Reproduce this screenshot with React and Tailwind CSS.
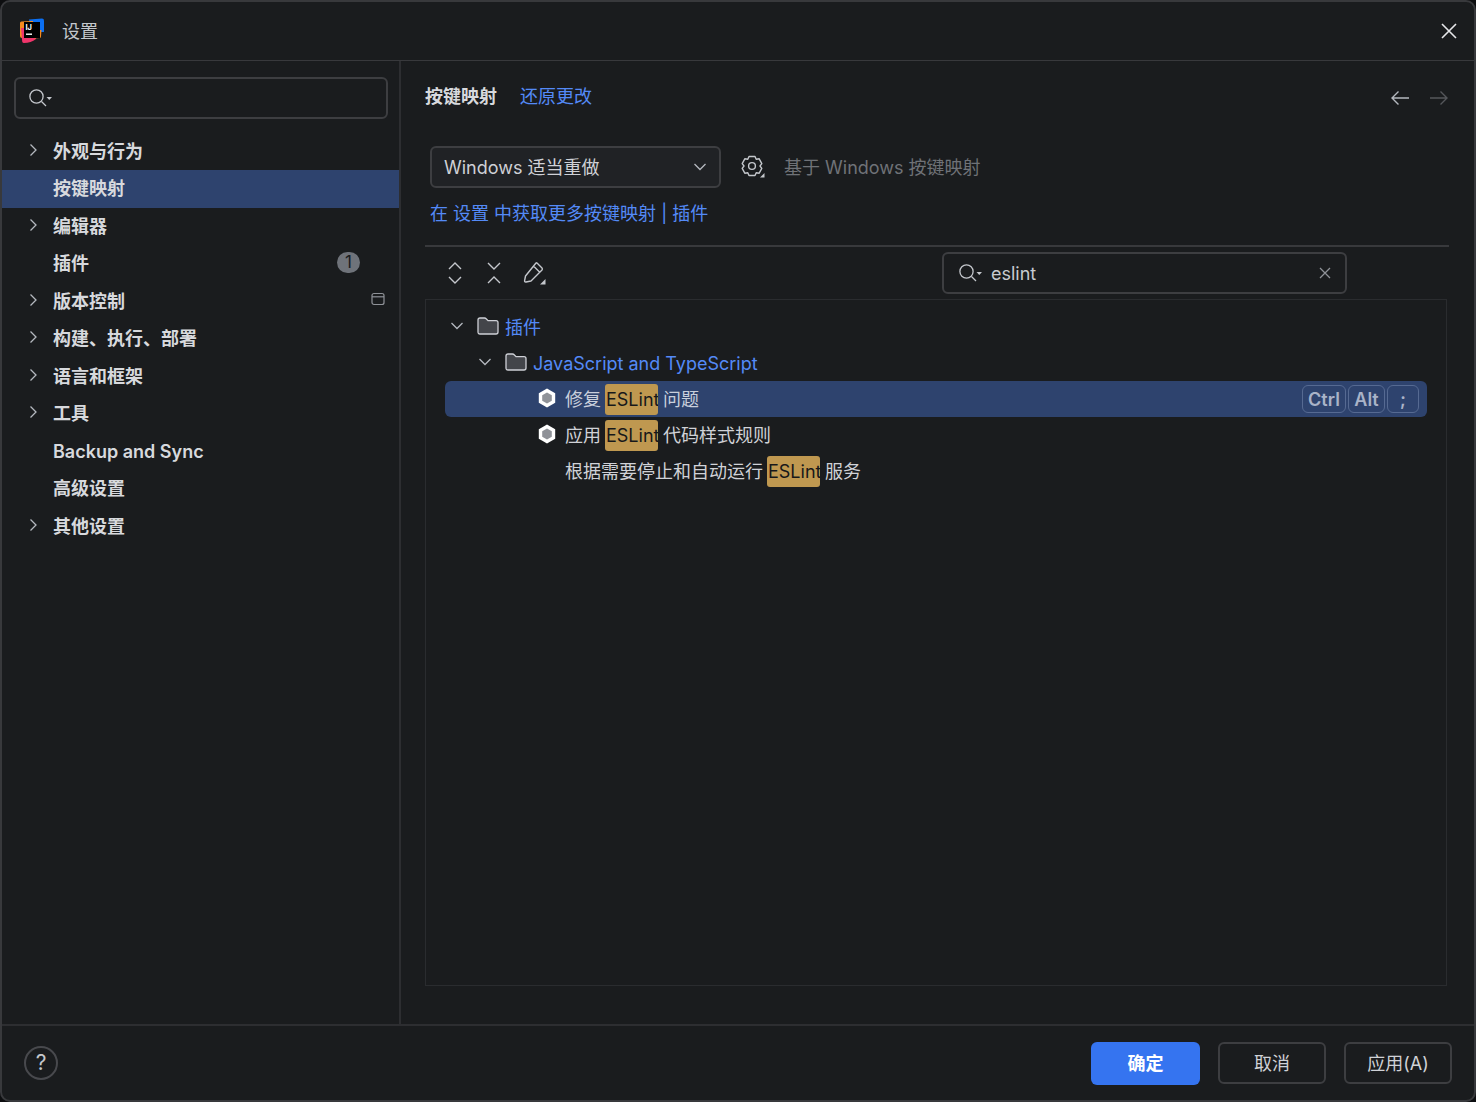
import React from 'react'

const navItems = [
  { label: '外观与行为', arrow: true },
  { label: '按键映射', selected: true },
  { label: '编辑器', arrow: true },
  { label: '插件', badge: true },
  { label: '版本控制', arrow: true, windowIcon: true },
  { label: '构建、执行、部署', arrow: true },
  { label: '语言和框架', arrow: true },
  { label: '工具', arrow: true },
  { label: 'Backup and Sync' },
  { label: '高级设置' },
  { label: '其他设置', arrow: true },
]

function Logo() {
  return (
    <svg width="26" height="26" viewBox="0 0 26 26" className="shrink-0">
      <path d="M10 1.5 L23 0.5 Q25 0.5 25 2.5 L25 14 L12 14 Z" fill="#0b6ff2" />
      <path d="M1 5 Q1 3.5 2.5 3.5 L14 3 L14 20 L3 20 Q1 20 1 18 Z" fill="#f58a1f" />
      <path d="M2 10 L15 10 L17 21 Q12 25 5 25 Q3.5 25 3.2 23.5 Z" fill="#f0356b" />
      <path d="M19 12 L22.5 12 L22 18.5 Q22 20 20.5 20 L15 20.5 Z" fill="#f58a1f" />
      <rect x="5" y="4" width="16" height="16" fill="#000" />
      <text x="6.5" y="11.5" fill="#fff" fontSize="7.5" fontWeight="700" fontFamily="Inter, sans-serif">IJ</text>
      <rect x="7" y="15.5" width="6" height="1.4" fill="#fff" />
    </svg>
  )
}

function ChevronRight() {
  return (
    <svg width="16" height="16" viewBox="0 0 16 16" fill="none" stroke="#b4b8bf" strokeWidth="1.3">
      <path d="M5.5 2.5 L11 8 L5.5 13.5" />
    </svg>
  )
}

function ChevronDown({ color = '#b4b8bf' }) {
  return (
    <svg width="16" height="16" viewBox="0 0 16 16" fill="none" stroke={color} strokeWidth="1.3">
      <path d="M2.5 5 L8 10.5 L13.5 5" />
    </svg>
  )
}

function SearchIcon() {
  return (
    <svg width="28" height="20" viewBox="0 0 28 20" fill="none" className="shrink-0">
      <circle cx="9.5" cy="8.5" r="6.6" stroke="#c4c7cc" strokeWidth="1.3" />
      <path d="M14.5 13.5 L19 18" stroke="#c4c7cc" strokeWidth="1.3" />
      <path d="M19.5 9 L25 9 L22.25 12 Z" fill="#c4c7cc" />
    </svg>
  )
}

function FolderIcon() {
  return (
    <svg width="22" height="20" viewBox="0 0 22 20" fill="none" className="shrink-0">
      <path
        d="M1 4 Q1 2 3 2 L7.5 2 Q8.5 2 9.2 2.8 L11 4.6 L19 4.6 Q21 4.6 21 6.6 L21 16 Q21 18 19 18 L3 18 Q1 18 1 16 Z"
        fill="#43454a"
        stroke="#ced0d6"
        strokeWidth="1.3"
      />
    </svg>
  )
}

function ActionIcon() {
  return (
    <svg width="22" height="22" viewBox="0 0 22 22" className="shrink-0">
      <path d="M11 1.5 L19.2 6.2 L19.2 15.8 L11 20.5 L2.8 15.8 L2.8 6.2 Z" fill="#fff" />
      <path d="M11 5.5 L15.8 8.2 L15.8 13.8 L11 16.5 L6.2 13.8 L6.2 8.2 Z" fill="#8f9298" />
    </svg>
  )
}

function Highlight() {
  return (
    <span className="inline-flex h-[31px] w-[53px] items-center overflow-hidden rounded-[3px] bg-[#bf9850] pl-[1px] text-[#17181a]">
      ESLint
    </span>
  )
}

function Kbd({ children, width }) {
  return (
    <span
      className="flex h-[28px] items-center justify-center rounded-[6px] border border-[#566a92] text-[18px] font-semibold text-[#a9b3c8]"
      style={{ width }}
    >
      {children}
    </span>
  )
}

export default function App() {
  return (
    <div className="h-[1102px] w-[1476px] overflow-hidden bg-[#0d0e10] text-[18px] text-[#d5d7dc] [font-family:Inter,'Noto_Sans_CJK_SC',sans-serif]">
      <div className="flex h-full flex-col rounded-[10px] border-2 border-[#38393c] bg-[#1a1c1e]">
        {/* title bar */}
        <div className="flex h-[59px] shrink-0 items-center border-b border-[#38393c] pl-[17px] pr-[16px]">
          <Logo />
          <span className="ml-[17px] text-[#c5c8cd]">设置</span>
          <svg width="18" height="18" viewBox="0 0 18 18" stroke="#e6e7ea" strokeWidth="1.6" className="ml-auto">
            <path d="M2 2 L16 16 M16 2 L2 16" />
          </svg>
        </div>

        <div className="flex min-h-0 flex-1">
          {/* left nav */}
          <div className="w-[399px] shrink-0 border-r-2 border-[#2d2e31] pt-[16px]">
            <div className="mx-[12px] flex h-[42px] w-[374px] items-center rounded-[6px] border-2 border-[#3d3e41] pl-[11px]">
              <SearchIcon />
            </div>
            <div className="mt-[13.5px]">
              {navItems.map((item) => (
                <div
                  key={item.label}
                  className={`flex h-[37.5px] items-center font-semibold text-[#d7d9dd] ${item.selected ? 'bg-[#2e436e]' : ''}`}
                >
                  <span className="mb-[3px] ml-[23px] flex w-[28px] shrink-0 items-center">
                    {item.arrow && <ChevronRight />}
                  </span>
                  <span>{item.label}</span>
                  {item.badge && (
                    <span className="mb-[3px] ml-auto mr-[39px] flex h-[21px] w-[23px] items-center justify-center rounded-full bg-[#6f737a] text-[17px] font-normal text-[#1a1c1e]">
                      1
                    </span>
                  )}
                  {item.windowIcon && (
                    <svg width="14" height="14" viewBox="0 0 14 14" fill="none" stroke="#8f9298" strokeWidth="1.2" className="mb-[4px] ml-auto mr-[14px]">
                      <rect x="1" y="1.5" width="12" height="11" rx="2" />
                      <path d="M1 4.8 L13 4.8" />
                    </svg>
                  )}
                </div>
              ))}
            </div>
          </div>

          {/* right panel */}
          <div className="min-w-0 flex-1 pl-[24px] pr-[25px]">
            <div className="flex h-[70px] items-center">
              <span className="font-semibold text-[#d7d9dd]">按键映射</span>
              <span className="ml-[23px] text-[#548af7]">还原更改</span>
              <div className="ml-auto mt-[4px] flex items-center gap-[19px]">
                <svg width="20" height="16" viewBox="0 0 20 16" fill="none" stroke="#b4b8bf" strokeWidth="1.4">
                  <path d="M19 8 L2 8 M8.5 1.5 L2 8 L8.5 14.5" />
                </svg>
                <svg width="20" height="16" viewBox="0 0 20 16" fill="none" stroke="#55575b" strokeWidth="1.4">
                  <path d="M1 8 L18 8 M11.5 1.5 L18 8 L11.5 14.5" />
                </svg>
              </div>
            </div>

            <div className="ml-[5px] mt-[15px] flex items-center">
              <div className="flex h-[42px] w-[291px] items-center justify-between rounded-[6px] border-2 border-[#3d3e41] bg-[#202225] pl-[12px] pr-[11px] text-[#cfd1d6]">
                <span>Windows 适当重做</span>
                <ChevronDown />
              </div>
              <svg width="26" height="26" viewBox="0 0 26 26" fill="none" className="ml-[19px]">
                <path
                  d="M9 2.5 L15 2.5 L16.2 5.2 L19.2 4.8 L21.8 9.6 L20 12 L21.8 14.4 L19.2 19.2 L16.2 18.8 L15 21.5 L9 21.5 L7.8 18.8 L4.8 19.2 L2.2 14.4 L4 12 L2.2 9.6 L4.8 4.8 L7.8 5.2 Z"
                  stroke="#c4c7cc"
                  strokeWidth="1.4"
                  strokeLinejoin="round"
                />
                <circle cx="12" cy="12" r="3.4" stroke="#c4c7cc" strokeWidth="1.4" />
                <path d="M20 23.5 L24.5 23.5 L24.5 19 Z" fill="#c4c7cc" />
              </svg>
              <span className="ml-[18px] text-[#6f7277]">基于 Windows 按键映射</span>
            </div>

            <div className="ml-[5px] mt-[12px] leading-[27px] text-[#548af7]">在 设置 中获取更多按键映射 | 插件</div>

            <div className="mt-[18px] h-[2px] bg-[#38393c]" />

            {/* toolbar */}
            <div className="flex h-[52px] items-center">
              <svg width="16" height="24" viewBox="0 0 16 24" fill="none" stroke="#c4c7cc" strokeWidth="1.4" className="ml-[22px]">
                <path d="M2 8 L8 2 L14 8 M2 16 L8 22 L14 16" />
              </svg>
              <svg width="16" height="24" viewBox="0 0 16 24" fill="none" stroke="#c4c7cc" strokeWidth="1.4" className="ml-[23px]">
                <path d="M2 2 L8 8 L14 2 M2 22 L8 16 L14 22" />
              </svg>
              <svg width="24" height="24" viewBox="0 0 24 24" fill="none" className="ml-[20px]">
                <path
                  d="M15 2 L20 7 Q20.8 8 20 9 L9 20 L4 21 Q2.4 21.2 2.6 19.6 L3.5 15 L14 2 Q14.5 1.6 15 2 Z M11.5 5 L17.5 11"
                  stroke="#c4c7cc"
                  strokeWidth="1.4"
                  strokeLinejoin="round"
                />
                <path d="M18 23.5 L23.5 23.5 L23.5 18 Z" fill="#c4c7cc" />
              </svg>
              <div className="ml-auto mr-[102px] flex h-[42px] w-[405px] items-center rounded-[6px] border-2 border-[#3d3e41] pl-[13px] pr-[13px]">
                <SearchIcon />
                <span className="ml-[6px] text-[#c8cbd0]">eslint</span>
                <svg width="14" height="14" viewBox="0 0 14 14" stroke="#8f9298" strokeWidth="1.3" className="ml-auto">
                  <path d="M2 2 L12 12 M12 2 L2 12" />
                </svg>
              </div>
            </div>

            {/* action tree */}
            <div className="mr-[2px] h-[687px] border border-[#2a2c2f] px-[19px] pt-[9px]">
              <div className="flex h-[36px] items-center text-[#548af7]">
                <span className="ml-[4px] mb-[2px]"><ChevronDown /></span>
                <span className="ml-[12px] mb-[2px]"><FolderIcon /></span>
                <span className="ml-[6px]">插件</span>
              </div>
              <div className="flex h-[36px] items-center text-[#548af7]">
                <span className="ml-[32px] mb-[2px]"><ChevronDown /></span>
                <span className="ml-[12px] mb-[2px]"><FolderIcon /></span>
                <span className="ml-[6px]">JavaScript and TypeScript</span>
              </div>
              <div className="flex h-[36px] items-center rounded-[6px] bg-[#2e436e] pr-[8px] text-[#c9cfdc]">
                <span className="mb-[2px] ml-[91px]"><ActionIcon /></span>
                <span className="ml-[7px]">修复</span>
                <span className="ml-[4px]"><Highlight /></span>
                <span className="ml-[5px]">问题</span>
                <div className="ml-auto flex items-center gap-[2px]">
                  <Kbd width="44px">Ctrl</Kbd>
                  <Kbd width="37px">Alt</Kbd>
                  <Kbd width="32px">;</Kbd>
                </div>
              </div>
              <div className="flex h-[36px] items-center text-[#d0d2d7]">
                <span className="mb-[2px] ml-[91px]"><ActionIcon /></span>
                <span className="ml-[7px]">应用</span>
                <span className="ml-[4px]"><Highlight /></span>
                <span className="ml-[5px]">代码样式规则</span>
              </div>
              <div className="flex h-[36px] items-center pl-[120px] text-[#d0d2d7]">
                <span>根据需要停止和自动运行</span>
                <span className="ml-[4px]"><Highlight /></span>
                <span className="ml-[5px]">服务</span>
              </div>
            </div>
          </div>
        </div>

        {/* footer */}
        <div className="flex h-[76px] shrink-0 items-center border-t-2 border-[#2d2e31] pl-[22px] pr-[22px]">
          <div className="flex h-[34px] w-[34px] items-center justify-center rounded-full border-2 border-[#48494d] text-[21px] text-[#c4c7cc]">?</div>
          <button className="ml-auto h-[43px] w-[109px] rounded-[6px] bg-[#3574f0] font-bold text-white">确定</button>
          <button className="ml-[18px] h-[42px] w-[108px] rounded-[6px] border-2 border-[#3d3e41] text-[#cfd1d6]">取消</button>
          <button className="ml-[18px] h-[42px] w-[108px] rounded-[6px] border-2 border-[#3d3e41] text-[#cfd1d6]">应用(A)</button>
        </div>
      </div>
    </div>
  )
}
